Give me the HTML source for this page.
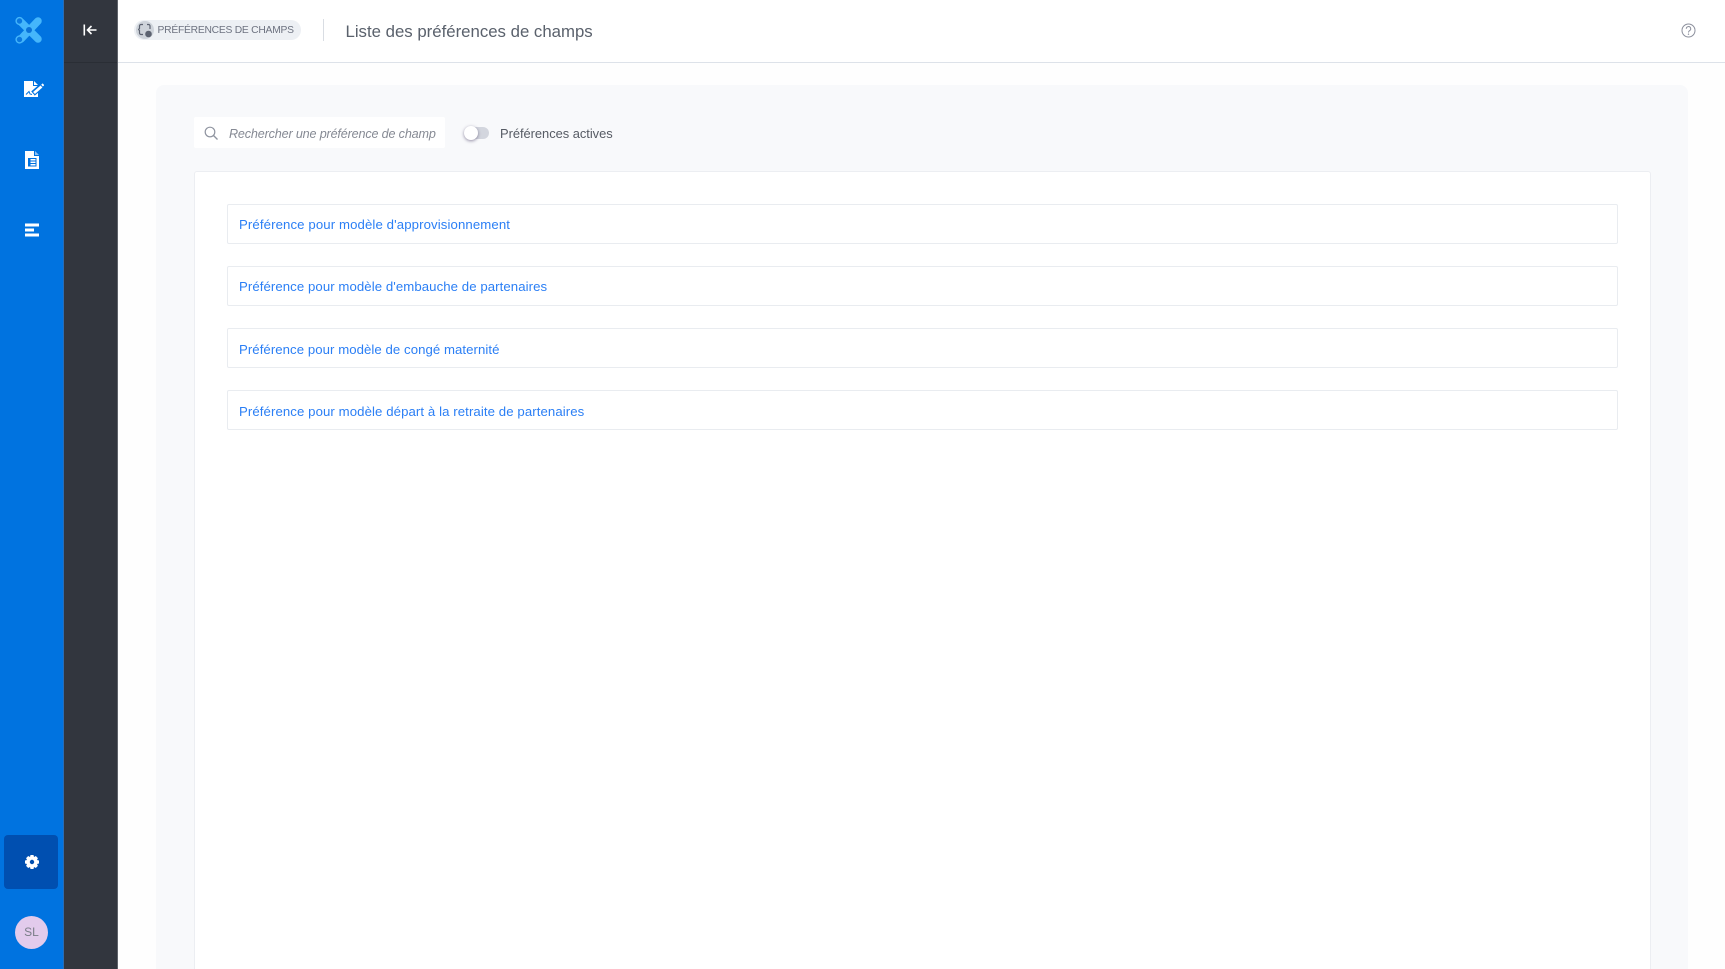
<!DOCTYPE html>
<html lang="fr">
<head>
<meta charset="utf-8">
<title>Liste des préférences de champs</title>
<style>
html,body{margin:0;padding:0;width:1725px;height:969px;overflow:hidden;background:#fefefe;font-family:"Liberation Sans",Arial,sans-serif}
#root{position:relative;width:1725px;height:969px;overflow:hidden;display:block}
#root div,#root span,#root svg{position:absolute;display:block}
.t{white-space:nowrap}
.item{left:227px;width:1391px;height:40.4px;box-sizing:border-box;background:#fff;border:1px solid #e9ecf0;border-radius:2px}
.item span{left:11px;top:1px;line-height:38px;font-size:13.2px;color:#2b7ff5;white-space:nowrap;letter-spacing:.11px}
</style>
</head>
<body>
<div id="root">
<div style="left:0;top:0;width:1725px;height:62px;background:#fff"></div>
<div style="left:117px;top:62px;width:1608px;height:1px;background:#dde2e9"></div>
<div style="left:0;top:0;width:64px;height:969px;background:#0073e0"></div>
<div style="left:63px;top:0;width:1px;height:969px;background:#2a6db5"></div>
<div style="left:64px;top:0;width:53px;height:969px;background:#32363e"></div>
<div style="left:64px;top:62px;width:53px;height:1px;background:#2a2e35"></div>
<div style="left:117px;top:0;width:1px;height:969px;background:#5f636a"></div>

<!-- logo -->
<svg style="left:14px;top:15px" width="30" height="30" viewBox="0 0 30 30">
<g stroke="#45b6fb" stroke-linecap="round" fill="none">
<line x1="7" y1="24" x2="24" y2="6" stroke-width="7.500"/>
<line x1="7" y1="7" x2="24" y2="24" stroke-width="7.500"/>
</g>
<circle cx="5.5" cy="6" r="3.4" fill="#0a78e0" stroke="#45b6fb" stroke-width="1.4"/>
<circle cx="5.5" cy="24.5" r="3.4" fill="#0a78e0" stroke="#45b6fb" stroke-width="1.4"/>
<circle cx="15" cy="15" r="3" fill="#0a72d8"/>
</svg>

<!-- edit doc icon -->
<svg style="left:24px;top:81px" width="20" height="17" viewBox="0 0 20 17">
<path d="M0 0H9V5H14V16H0Z" fill="#fff"/>
<path d="M10 0L14 4H10Z" fill="#fff"/>
<path d="M19 4L9 12.500" stroke="#0073e0" stroke-width="5.500" fill="none"/>
<path d="M17.500 5.500L10 12" stroke="#fff" stroke-width="2.800" fill="none"/>
<path d="M19.500 3.300L18 4.600" stroke="#fff" stroke-width="2.500" fill="none"/>
<path d="M8.500 14.200L7.800 12.500L10 13.500Z" fill="#fff"/>
<path d="M2 13.500L5 10.500L6 13L8 13.500" stroke="#0073e0" stroke-width="1" fill="none"/>
</svg>

<!-- doc icon -->
<svg style="left:25px;top:151px" width="14" height="18" viewBox="0 0 14 18">
<path d="M0 0H9V5H14V18H0Z" fill="#fff"/>
<path d="M10 0L14 4H10Z" fill="#8dc0f2"/>
<path d="M3 7H11.500V15.500H3Z" fill="#0073e0"/>
<path d="M5.500 8H10.500V9.500H5.500ZM5.500 10.500H10.500V12H5.500ZM5.500 13H10.500V14.500H5.500Z" fill="#fff"/>
</svg>

<!-- lines icon -->
<svg style="left:25px;top:223px" width="14" height="14" viewBox="0 0 14 14">
<rect x="0" y="0.500" width="14" height="3" fill="#fff"/>
<rect x="0" y="5.500" width="9" height="3" fill="#fff"/>
<rect x="0" y="10.500" width="14" height="3" fill="#fff"/>
</svg>

<!-- settings -->
<div style="left:4px;top:835px;width:54px;height:54px;background:#004fb0;border-radius:4px"></div>
<svg style="left:25px;top:855px" width="14" height="14" viewBox="0 0 14 14">
<path d="M5.500 0H8.500L9 2L10.800 1L12.900 3.100L12 5L14 5.500V8.500L12 9L12.900 10.900L10.800 13L9 12L8.500 14H5.500L5 12L3.200 13L1.100 10.900L2 9L0 8.500V5.500L2 5L1.100 3.100L3.200 1L5 2Z" fill="#fff"/>
<circle cx="7" cy="7" r="2.200" fill="#004fb0"/>
</svg>

<!-- avatar -->
<div style="left:15px;top:916px;width:33px;height:33px;border-radius:50%;background:#e2cbec"></div>
<div class="t" style="left:15px;top:916px;width:33px;line-height:33px;text-align:center;font-size:12px;color:#7a7d88">SL</div>

<!-- collapse -->
<svg style="left:83px;top:24px" width="14" height="12" viewBox="0 0 14 12">
<rect x="0.500" y="0.500" width="1.600" height="11" fill="#fff"/>
<path d="M13.500 6H4.500M8.500 2L4.500 6L8.500 10" stroke="#fff" stroke-width="1.600" fill="none"/>
</svg>

<!-- breadcrumb pill -->
<div style="left:134px;top:20px;width:167px;height:20px;border-radius:10px;background:#edf0f4"></div>
<div style="left:136px;top:21px;width:18px;height:18px;border-radius:50%;background:#ced3da"></div>
<svg style="left:138px;top:23px" width="15" height="15" viewBox="0 0 15 15">
<path d="M5 1.500H3A1.500 1.500 0 0 0 1.500 3V5.500L.5 6.500L1.500 7.500V10A1.500 1.500 0 0 0 3 11.500H5M9 1.500H10.500A1.500 1.500 0 0 1 12 3V6" stroke="#5c6270" stroke-width="1.200" fill="none"/>
<circle cx="10.500" cy="11" r="3.300" fill="#5c6270"/>
</svg>
<div class="t" style="left:157.500px;top:20.500px;line-height:20px;font-size:10.300px;color:#6d7280;letter-spacing:-.24px">PRÉFÉRENCES DE CHAMPS</div>
<div style="left:323px;top:19px;width:1px;height:22px;background:#d9dde3"></div>
<div class="t" style="left:345.500px;top:18.500px;line-height:25px;font-size:16.800px;color:#5a616c;letter-spacing:0">Liste des préférences de champs</div>

<!-- help -->
<svg style="left:1681px;top:23px" width="15" height="15" viewBox="0 0 15 15">
<circle cx="7.500" cy="7.500" r="6.500" fill="none" stroke="#8b8f9c" stroke-width="1"/>
<path d="M5.300 5.800A2.200 2.200 0 1 1 8.500 7.700C7.700 8.200 7.500 8.600 7.500 9.500" fill="none" stroke="#8b8f9c" stroke-width="1"/>
<circle cx="7.500" cy="11.200" r=".7" fill="#8b8f9c"/>
</svg>

<!-- panel -->
<div style="left:156px;top:85px;width:1532px;height:900px;background:#f8f9fb;border-radius:8px"></div>

<!-- search -->
<div style="left:194px;top:117px;width:251px;height:31px;background:#fff;border-radius:2px"></div>
<svg style="left:204px;top:126px" width="15" height="15" viewBox="0 0 15 15">
<circle cx="6" cy="6" r="4.800" fill="none" stroke="#8f94a0" stroke-width="1.200"/>
<path d="M9.500 9.500L13.500 13.500" stroke="#8f94a0" stroke-width="1.300"/>
</svg>
<div class="t" style="left:229px;top:119px;line-height:31px;font-size:12.600px;font-style:italic;color:#868a94;letter-spacing:-.16px">Rechercher une préférence de champ</div>

<!-- toggle -->
<div style="left:464px;top:127px;width:25px;height:12px;border-radius:6px;background:#d3d6de"></div>
<div style="left:464px;top:126px;width:14px;height:14px;border-radius:50%;background:#fff;box-shadow:0 1px 3px rgba(60,50,90,.55)"></div>
<div class="t" style="left:500px;top:118px;line-height:32px;font-size:12.900px;color:#565b64;letter-spacing:-.03px">Préférences actives</div>

<!-- card -->
<div style="left:194px;top:171px;width:1457px;height:820px;box-sizing:border-box;background:#fff;border:1px solid #eceef2;border-radius:3px"></div>

<div class="item" style="top:204px"><span>Préférence pour modèle d'approvisionnement</span></div>
<div class="item" style="top:266px"><span style="letter-spacing:.075px">Préférence pour modèle d'embauche de partenaires</span></div>
<div class="item" style="top:328px"><span style="letter-spacing:.06px;top:1.500px">Préférence pour modèle de congé maternité</span></div>
<div class="item" style="top:390px"><span style="letter-spacing:.09px;top:2px">Préférence pour modèle départ à la retraite de partenaires</span></div>
</div>
</body>
</html>
